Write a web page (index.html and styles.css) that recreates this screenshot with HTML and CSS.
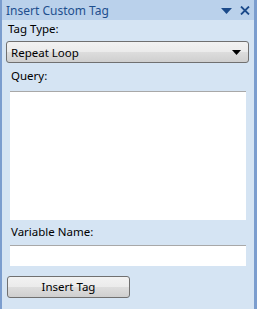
FILE: index.html
```html
<!DOCTYPE html>
<html>
<head>
<meta charset="utf-8">
<link rel="stylesheet" href="styles.css">
</head>
<body>
<div class="pane">
  <div class="titlebar">
    <span class="title">Insert Custom Tag</span>
    <span class="tools">
      <svg class="tri" width="11" height="6" viewBox="0 0 11 6"><path d="M0 0H11L5.5 6Z" fill="#1b4a8a"/></svg>
      <svg class="close" width="10" height="9" viewBox="0 0 10 9"><path d="M1 0.5L9 8.5M9 0.5L1 8.5" stroke="#1b4a8a" stroke-width="1.8"/></svg>
    </span>
  </div>
  <div class="body">
    <div class="label first">Tag Type:</div>
    <div class="select">
      <span>Repeat Loop</span>
      <svg width="9" height="5" viewBox="0 0 9 5"><path d="M0 0H9L4.5 5Z" fill="#000"/></svg>
    </div>
    <div class="label ind">Query:</div>
    <div class="textarea"></div>
    <div class="label ind var">Variable Name:</div>
    <div class="input"></div>
    <div class="button">Insert Tag</div>
  </div>
</div>
</body>
</html>
```
FILE: styles.css
```css
html, body {
  margin: 0;
  padding: 0;
  background: #d5e4f3;
}
.pane {
  width: 257px;
  height: 309px;
  box-sizing: border-box;
  border-left: 2px solid #7b9dce;
  border-right: 3px solid #7b9dce;
  background: #d5e4f3;
  font-family: "Noto Sans", "DejaVu Sans", sans-serif;
  font-size: 11.5px;
  color: #000;
  display: flex;
  flex-direction: column;
}
.titlebar {
  height: 20px;
  background: #bad1eb;
  display: flex;
  align-items: center;
  justify-content: space-between;
  padding: 0 4px 0 4px;
}
.title {
  color: #1e4f8e;
  font-size: 12px;
}
.tools {
  display: flex;
  align-items: center;
  gap: 8px;
}
.tri { margin-top: 1px; }
.body {
  display: flex;
  flex-direction: column;
  padding: 0 5px 0 4px;
}
.label {
  height: 14px;
  line-height: 14px;
  padding-left: 2px;
}
.label.first { margin-top: 2px; margin-bottom: 5px; }
.label.ind { padding-left: 5px; margin-top: 6px; margin-bottom: 8px; }
.label.var { margin-top: 5px; margin-bottom: 6px; }
.select {
  height: 20px;
  border: 1px solid #707070;
  border-radius: 3px;
  background: linear-gradient(#f2f2f2 0%, #ebebeb 50%, #dddddd 51%, #cfcfcf 100%);
  display: flex;
  align-items: center;
  justify-content: space-between;
  padding: 0 7px 0 4px;
  width: 230px;
}
.textarea {
  margin-left: 4px;
  width: 236px;
  height: 128px;
  background: #fff;
  border-top: 1px solid #a8a8a8;
}
.input {
  margin-left: 4px;
  width: 236px;
  height: 20px;
  background: #fff;
  border-top: 1px solid #a8a8a8;
}
.button {
  margin-top: 10px;
  margin-left: 1px;
  width: 121px;
  height: 20px;
  line-height: 20px;
  text-align: center;
  border: 1px solid #707070;
  border-radius: 3px;
  background: linear-gradient(#f2f2f2 0%, #ebebeb 50%, #dddddd 51%, #cfcfcf 100%);
}
```
